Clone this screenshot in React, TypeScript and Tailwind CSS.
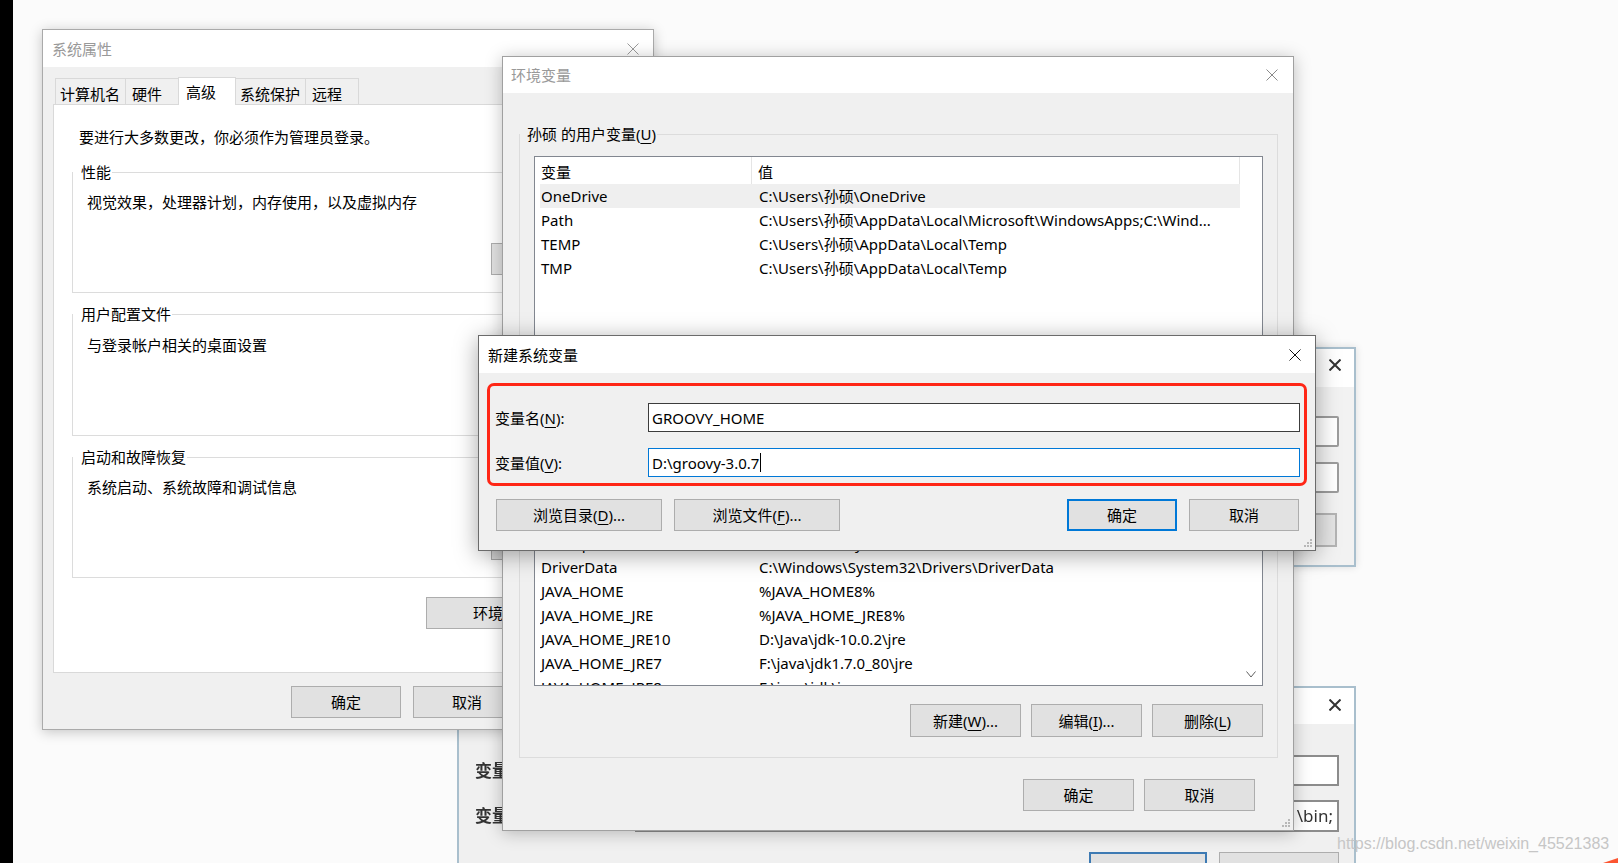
import React from "react";

const X = ({ color, w = 1 }: { color: string; w?: number }) => (
  <svg width="12" height="12" viewBox="0 0 12 12" className="shrink-0">
    <path d="M0.5 0.5L11.5 11.5M11.5 0.5L0.5 11.5" stroke={color} strokeWidth={w} fill="none" />
  </svg>
);

const Grip = () => (
  <svg width="9" height="9" viewBox="0 0 9 9">
    {[
      [6, 0],
      [3, 3],
      [6, 3],
      [0, 6],
      [3, 6],
      [6, 6],
    ].map(([x, y], i) => (
      <rect key={i} x={x} y={y} width="2" height="2" fill="#b8b8b8" />
    ))}
  </svg>
);

const U = ({ children }: { children: React.ReactNode }) => (
  <span className="underline underline-offset-[3px] decoration-1">{children}</span>
);

function Btn({
  children,
  className = "",
  def = false,
}: {
  children?: React.ReactNode;
  className?: string;
  def?: boolean;
}) {
  return (
    <div
      className={
        def
          ? `flex items-center justify-center bg-[#e1e1e1] border-2 border-[#0078d7] shrink-0 ${className}`
          : `flex items-center justify-center bg-[#e1e1e1] border border-[#adadad] shrink-0 ${className}`
      }
    >
      {children}
    </div>
  );
}

type Row = [string, string];

function ListView({
  rows,
  heightClass,
  selected = -1,
  arrow = false,
}: {
  rows: Row[];
  heightClass: string;
  selected?: number;
  arrow?: boolean;
}) {
  return (
    <div className={`mt-[12px] ml-[14px] mr-[14px] bg-white border border-[#828790] flex overflow-hidden shrink-0 ${heightClass}`}>
      <div className="w-[705px] flex flex-col shrink-0">
        <div className="flex h-[27px] shrink-0 border-r border-[#e5e5e5]">
          <div className="w-[217px] h-full flex items-center pl-[6px] pt-[2px] border-r border-[#e5e5e5]">变量</div>
          <div className="flex items-center pl-[6px] pt-[2px]">值</div>
        </div>
        {rows.map(([k, v], i) => (
          <div
            key={i}
            className={
              i === selected
                ? "flex h-[24px] items-center ml-[5px] shrink-0 bg-[#efefef]"
                : "flex h-[24px] items-center ml-[5px] shrink-0"
            }
          >
            <div className="w-[212px] pl-[1px] whitespace-nowrap overflow-hidden shrink-0">{k}</div>
            <div className="flex-1 min-w-0 pl-[7px] whitespace-nowrap overflow-hidden">{v}</div>
          </div>
        ))}
      </div>
      <div className="flex-1 flex flex-col justify-end items-center pb-[7px]">
        {arrow && (
          <svg width="10" height="7" viewBox="0 0 10 7">
            <polyline points="0.5,0.5 5,6 9.5,0.5" stroke="#606060" strokeWidth="1" fill="none" />
          </svg>
        )}
      </div>
    </div>
  );
}

const userRows: Row[] = [
  ["OneDrive", "C:\\Users\\孙硕\\OneDrive"],
  ["Path", "C:\\Users\\孙硕\\AppData\\Local\\Microsoft\\WindowsApps;C:\\Wind..."],
  ["TEMP", "C:\\Users\\孙硕\\AppData\\Local\\Temp"],
  ["TMP", "C:\\Users\\孙硕\\AppData\\Local\\Temp"],
];

const sysRows: Row[] = [
  ["", ""],
  ["", ""],
  ["ComSpec", "C:\\Windows\\system32\\cmd.exe"],
  ["DriverData", "C:\\Windows\\System32\\Drivers\\DriverData"],
  ["JAVA_HOME", "%JAVA_HOME8%"],
  ["JAVA_HOME_JRE", "%JAVA_HOME_JRE8%"],
  ["JAVA_HOME_JRE10", "D:\\Java\\jdk-10.0.2\\jre"],
  ["JAVA_HOME_JRE7", "F:\\java\\jdk1.7.0_80\\jre"],
  ["JAVA_HOME_JRE8", "F:\\java\\jdk\\jre"],
];

function Group({
  label,
  className,
  bg,
  children,
}: {
  label?: React.ReactNode;
  className: string;
  bg: string;
  children?: React.ReactNode;
}) {
  return (
    <div className={`border border-[#dcdcdc] flex flex-col shrink-0 ${className}`}>
      <span className={`-mt-[11px] px-[1px] w-fit h-[20px] leading-[20px] ${bg}`}>{label}</span>
      {children}
    </div>
  );
}

function SystemProps() {
  return (
    <div className="absolute left-[42px] top-[29px] w-[612px] h-[701px] flex flex-col border border-[#aaaaaa] bg-[#f0f0f0] shadow-[0_2px_12px_rgba(0,0,0,0.22)]">
      <div className="h-[37px] shrink-0 bg-white flex items-center justify-between pl-[9px] pr-[14px] text-[#999999]">
        <span>系统属性</span>
        <X color="#9a9a9a" />
      </div>
      <div className="flex-1 flex flex-col px-[10px] pt-[10px]">
        <div className="flex items-end h-[27px] pl-[2px] shrink-0">
          <div className="w-[71px] h-[26px] border border-b-0 border-[#d9d9d9] bg-[#f0f0f0] flex items-center pl-[4px] pt-[4px]">计算机名</div>
          <div className="-ml-px w-[54px] h-[26px] border border-b-0 border-[#d9d9d9] bg-[#f0f0f0] flex items-center pl-[6px] pt-[4px]">硬件</div>
          <div className="-ml-px w-[58px] h-[28px] -mb-px relative z-10 border border-b-0 border-[#d9d9d9] bg-white flex items-center pl-[7px]">高级</div>
          <div className="-ml-px w-[71px] h-[26px] border border-b-0 border-[#d9d9d9] bg-[#f0f0f0] flex items-center pl-[4px] pt-[4px]">系统保护</div>
          <div className="-ml-px w-[54px] h-[26px] border border-b-0 border-[#d9d9d9] bg-[#f0f0f0] flex items-center pl-[6px] pt-[4px]">远程</div>
        </div>
        <div className="h-[569px] shrink-0 bg-white border border-[#d9d9d9] flex flex-col px-[18px]">
          <div className="ml-[7px] mt-[22px]">要进行大多数更改，你必须作为管理员登录。</div>
          <Group label={<span className="ml-[7px]">性能</span>} className="mt-[25px] h-[121px]" bg="bg-white">
            <div className="mt-[10px] pl-[14px]">视觉效果，处理器计划，内存使用，以及虚拟内存</div>
            <Btn className="mt-auto mb-[17px] self-end mr-[19px] w-[113px] h-[32px]" />
          </Group>
          <Group label={<span className="ml-[7px]">用户配置文件</span>} className="mt-[21px] h-[122px]" bg="bg-white">
            <div className="mt-[11px] pl-[14px]">与登录帐户相关的桌面设置</div>
            <Btn className="mt-auto mb-[17px] self-end mr-[19px] w-[100px] h-[32px]" />
          </Group>
          <Group label={<span className="ml-[7px]">启动和故障恢复</span>} className="mt-[21px] h-[121px]" bg="bg-white">
            <div className="mt-[10px] pl-[14px]">系统启动、系统故障和调试信息</div>
            <Btn className="mt-auto mb-[17px] self-end mr-[19px] w-[113px] h-[32px]" />
          </Group>
          <Btn className="mt-[19px] self-end mr-[20px] w-[178px] h-[32px] !justify-start pl-[46px]">
            <span className="whitespace-nowrap">环境变量</span>
          </Btn>
        </div>
        <div className="flex justify-end gap-[12px] mt-[13px] -mr-[2px]">
          <Btn className="w-[110px] h-[32px]">确定</Btn>
          <Btn className="w-[110px] h-[32px] !justify-start pl-[38px]">取消</Btn>
          <Btn className="w-[110px] h-[32px]" />
        </div>
      </div>
    </div>
  );
}

function EnvVars() {
  return (
    <div className="absolute left-[502px] top-[56px] w-[792px] h-[775px] flex flex-col border border-[#a0a0a0] bg-[#f0f0f0] shadow-[0_2px_16px_rgba(0,0,0,0.25)]">
      <div className="h-[36px] shrink-0 bg-white flex items-center justify-between pl-[8px] pr-[15px] text-[#999999]">
        <span>环境变量</span>
        <X color="#8a8a8a" />
      </div>
      <div className="relative flex-1 flex flex-col pl-[16px] pr-[15px] pt-[41px]">
        <Group
          label={
            <span className="ml-[6px]">
              孙硕 的用户变量(<U>U</U>)
            </span>
          }
          className="h-[277px]"
          bg="bg-[#f0f0f0]"
        >
          <ListView rows={userRows} heightClass="h-[182px]" selected={0} />
          <div className="flex justify-end gap-[10px] mt-[18px] mr-[14px]">
            <Btn className="w-[111px] h-[33px]" />
            <Btn className="w-[111px] h-[33px]" />
            <Btn className="w-[111px] h-[33px]" />
          </div>
        </Group>
        <Group className="mt-[22px] h-[325px]" bg="bg-[#f0f0f0]">
          <ListView rows={sysRows} heightClass="h-[231px]" arrow />
          <div className="flex justify-end gap-[10px] mt-[18px] mr-[14px]">
            <Btn className="w-[111px] h-[33px]">
              新建(<U>W</U>)...
            </Btn>
            <Btn className="w-[111px] h-[33px]">
              编辑(<U>I</U>)...
            </Btn>
            <Btn className="w-[111px] h-[33px]">
              删除(<U>L</U>)
            </Btn>
          </div>
        </Group>
        <div className="flex justify-end gap-[10px] mt-[21px] mr-[23px]">
          <Btn className="w-[111px] h-[32px]">确定</Btn>
          <Btn className="w-[111px] h-[32px]">取消</Btn>
        </div>
        <div className="absolute right-[2px] bottom-[2px]">
          <Grip />
        </div>
      </div>
    </div>
  );
}

function NewSysVar() {
  return (
    <div className="absolute left-[478px] top-[335px] w-[838px] h-[216px] flex flex-col border border-[#6b6b6b] bg-[#f0f0f0] shadow-[0_4px_22px_rgba(0,0,0,0.35)]">
      <div className="h-[37px] shrink-0 bg-white flex items-center justify-between pl-[9px] pr-[14px] text-black">
        <span>新建系统变量</span>
        <X color="#111111" />
      </div>
      <div className="relative flex-1 flex flex-col pl-[16px] pr-[15px]">
        <div className="flex items-center mt-[30px] h-[29px]">
          <div className="w-[153px] shrink-0">
            变量名(<U>N</U>):
          </div>
          <div className="flex-1 h-full bg-white border border-[#3c3c3c] flex items-center pl-[3px]">GROOVY_HOME</div>
        </div>
        <div className="flex items-center mt-[16px] h-[29px]">
          <div className="w-[153px] shrink-0">
            变量值(<U>V</U>):
          </div>
          <div className="flex-1 h-full bg-white border border-[#0078d7] flex items-center pl-[3px]">
            <span>D:\groovy-3.0.7</span>
            <span className="inline-block w-px h-[19px] bg-black ml-px" />
          </div>
        </div>
        <div className="flex mt-[22px] h-[32px]">
          <Btn className="w-[166px] ml-[1px]">
            浏览目录(<U>D</U>)...
          </Btn>
          <Btn className="w-[166px] ml-[12px]">
            浏览文件(<U>F</U>)...
          </Btn>
          <Btn className="w-[110px] ml-auto" def>
            确定
          </Btn>
          <Btn className="w-[110px] ml-[12px] mr-[1px]">取消</Btn>
        </div>
        <div className="absolute left-[8px] top-[10px] w-[820px] h-[103px] border-[3px] border-[#ff2616] rounded-[7px]" />
        <div className="absolute right-[2px] bottom-[2px]">
          <Grip />
        </div>
      </div>
    </div>
  );
}

function BlurWinA() {
  return (
    <div className="absolute left-[900px] top-[347px] w-[456px] h-[220px] flex flex-col border-2 border-[#a9bfcd] bg-[#f2f2f2] blur-[0.7px] shadow-[0_0_8px_rgba(0,0,0,0.12)]">
      <div className="h-[38px] shrink-0 bg-white flex items-center justify-end pr-[13px] pb-[6px]">
        <X color="#333333" w={2} />
      </div>
      <div className="flex-1 flex flex-col items-end pr-[15px]">
        <div className="mt-[29px] w-[300px] h-[31px] bg-white border-2 border-[#9c9c9c] rounded-[2px]" />
        <div className="mt-[15px] w-[300px] h-[31px] bg-white border-2 border-[#9c9c9c] rounded-[2px]" />
        <div className="mt-[20px] mr-[2px] w-[120px] h-[34px] bg-[#e4e4e4] border-2 border-[#b4b4b4]" />
      </div>
    </div>
  );
}

function BlurWinB() {
  return (
    <div className="absolute left-[457px] top-[686px] w-[899px] h-[177px] flex flex-col border-2 border-b-0 border-[#a9bfcd] bg-[#f0f0f0] blur-[0.7px]">
      <div className="h-[36px] shrink-0 bg-white flex items-center justify-end pr-[13px] pb-[2px]">
        <X color="#333333" w={2} />
      </div>
      <div className="flex-1 flex flex-col pl-[16px] pr-[15px] text-[17px] font-bold text-[#333333] overflow-hidden">
        <div className="flex items-center mt-[31px] h-[31px] shrink-0">
          <div className="w-[160px] shrink-0">变量</div>
          <div className="flex-1 h-full bg-white border-2 border-[#8c8c8c]" />
        </div>
        <div className="flex items-center mt-[14px] h-[32px] shrink-0">
          <div className="w-[160px] shrink-0">变量</div>
          <div className="flex-1 h-full bg-white border-2 border-[#8c8c8c] flex items-center justify-end pr-[4px] overflow-hidden whitespace-nowrap font-normal">
            \bin;
          </div>
        </div>
        <div className="flex justify-end mt-[20px] shrink-0">
          <div className="w-[118px] h-[34px] bg-[#e1e1e1] border-2 border-[#3d7ab3]" />
          <div className="w-[120px] h-[34px] ml-[12px] bg-[#e1e1e1] border border-[#adadad]" />
        </div>
      </div>
    </div>
  );
}

export default function App() {
  return (
    <div className="relative w-[1618px] h-[863px] overflow-hidden bg-[#fbfbfb] flex text-[15px] leading-[20px] text-black [font-family:'Noto_Sans','Noto_Sans_CJK_SC',sans-serif]">
      <div className="w-[13px] h-full bg-black shrink-0" />
      <BlurWinB />
      <BlurWinA />
      <SystemProps />
      <EnvVars />
      <NewSysVar />
      <div className="absolute left-[1337px] top-[834px] text-[16px] leading-[20px] text-[#c6c6c6] [font-family:'Liberation_Sans',Arial,sans-serif] whitespace-nowrap">
        https://blog.csdn.net/weixin_45521383
      </div>
      <svg className="absolute right-0 bottom-0" width="15" height="5" viewBox="0 0 15 5">
        <polygon points="0,5 15,0 15,5" fill="#fc5531" />
      </svg>
    </div>
  );
}
